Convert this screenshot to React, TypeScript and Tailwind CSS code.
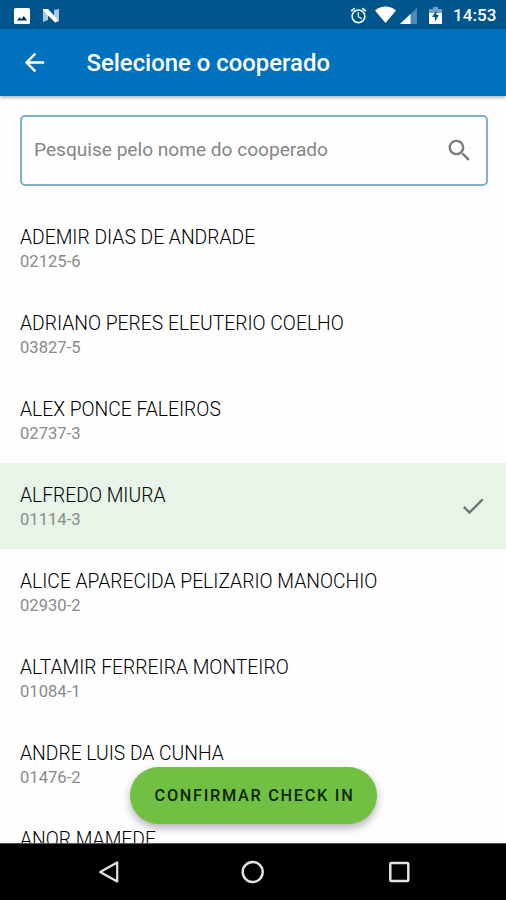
interface Cooperado {
  name: string;
  code?: string;
}

const cooperados: Cooperado[] = [
  { name: "ADEMIR DIAS DE ANDRADE", code: "02125-6" },
  { name: "ADRIANO PERES ELEUTERIO COELHO", code: "03827-5" },
  { name: "ALEX PONCE FALEIROS", code: "02737-3" },
  { name: "ALFREDO MIURA", code: "01114-3" },
  { name: "ALICE APARECIDA PELIZARIO MANOCHIO", code: "02930-2" },
  { name: "ALTAMIR FERREIRA MONTEIRO", code: "01084-1" },
  { name: "ANDRE LUIS DA CUNHA", code: "01476-2" },
  { name: "ANOR MAMEDE" },
];

const selectedCode = "01114-3";

function StatusBar() {
  return (
    <div className="flex h-[29px] shrink-0 items-center bg-[#00558d] pl-3.5 pr-[9px] pt-0.5 text-white">
      <svg className="h-4 w-4" viewBox="0 0 16 16">
        <rect width="16" height="16" rx="1.5" fill="currentColor" />
        <path d="M3 12.5l2.5-3.3 1.8 2.1L9.8 8l3.3 4.5z" fill="#00305c" />
      </svg>
      <svg className="ml-3 h-[15px] w-[18px]" viewBox="0 0 18 15">
        <path d="M1 1l5 3v8l-5 2zM12 2l5-1v12l-5-3z" fill="#a9c9e2" />
        <path d="M1 1h5l11 12-4 1.5L1 2.5z" fill="#fff" />
      </svg>

      <svg className="ml-auto h-[19px] w-[19px]" viewBox="0 0 24 24" fill="currentColor">
        <path d="M22 5.72l-4.6-3.86-1.29 1.53 4.6 3.86L22 5.72zM7.88 3.39L6.6 1.86 2 5.71l1.29 1.53 4.59-3.85zM12.5 8H11v6l4.75 2.85.75-1.23-4-2.37V8zM12 4c-4.97 0-9 4.03-9 9s4.02 9 9 9c4.97 0 9-4.03 9-9s-4.03-9-9-9zm0 16c-3.87 0-7-3.13-7-7s3.13-7 7-7 7 3.13 7 7-3.13 7-7 7z" />
      </svg>
      <svg className="mb-0.5 ml-[7px] h-[17px] w-[21px]" viewBox="0 0 21 17">
        <path d="M0 4.5C6 -.8 15 -.8 21 4.5L10.5 17z" fill="currentColor" />
      </svg>
      <svg className="ml-1 h-4 w-[17px]" viewBox="0 0 17 16">
        <path d="M17 0v16H0z" fill="#4c8bb8" />
        <path d="M10.5 6v10H0z" fill="currentColor" />
      </svg>
      <svg className="ml-3 h-[17px] w-[13px]" viewBox="0 0 13 17">
        <path d="M4 0h5v2h4v5H0V2h4z" fill="#6fa3c8" />
        <path d="M0 6h13v11H0z" fill="currentColor" />
        <path d="M7.5 3.5L3 10h3v4.5L10 8H7.5z" fill="#00558d" />
      </svg>
      <span className="ml-[11px] w-[44px] whitespace-nowrap text-[17px] font-medium leading-none tracking-[0.1px]">
        14:53
      </span>
    </div>
  );
}

function Header() {
  return (
    <header className="z-10 flex h-[67px] shrink-0 items-center bg-[#0071bc] pl-[19.5px] text-white shadow-[0_1px_4px_rgba(0,0,0,0.4)]">
      <svg className="h-[29px] w-[29px]" viewBox="0 0 24 24" fill="currentColor">
        <path d="M20 11H7.83l5.59-5.59L12 4l-8 8 8 8 1.41-1.41L7.83 13H20v-2z" />
      </svg>
      <h1 className="ml-[38px] mt-[3px] whitespace-nowrap text-[23.9px] font-medium leading-none">
        Selecione o cooperado
      </h1>
    </header>
  );
}

function SearchField() {
  return (
    <div className="ml-5 mr-[18px] mt-[19px] flex h-[71px] shrink-0 items-center justify-between rounded-[5px] border-2 border-[#7fb2c0] pb-px pl-3 pr-3">
      <span className="whitespace-nowrap text-[19.1px] text-[#858585]">
        Pesquise pelo nome do cooperado
      </span>
      <svg className="h-[29px] w-[29px] text-[#7d7d7d]" viewBox="0 0 24 24" fill="currentColor">
        <path d="M15.5 14h-.79l-.28-.27C15.41 12.59 16 11.11 16 9.5 16 5.91 13.09 3 9.5 3S3 5.91 3 9.5 5.91 16 9.5 16c1.61 0 3.09-.59 4.23-1.57l.27.28v.79l5 4.99L20.49 19l-4.99-5zm-6 0C7.01 14 5 11.99 5 9.5S7.01 5 9.5 5 14 7.01 14 9.5 11.99 14 9.5 14z" />
      </svg>
    </div>
  );
}

function CooperadoRow({ name, code, selected }: Cooperado & { selected: boolean }) {
  return (
    <li
      className={`flex h-[86.1px] shrink-0 items-start justify-between pl-5 pr-[19px] pt-5 ${
        selected ? "bg-[#e7f5e8]" : ""
      }`}
    >
      <div className="whitespace-nowrap">
        <div className="text-[19.3px] font-light leading-[26px] text-black">{name}</div>
        {code && <div className="text-[16.6px] leading-[22px] text-[#8a8a8a]">{code}</div>}
      </div>
      {selected && (
        <svg className="mt-[9px] h-7 w-7 text-[#6d776e]" viewBox="0 0 24 24" fill="currentColor">
          <path d="M9 16.17L4.83 12l-1.42 1.41L9 19 21 7l-1.41-1.41z" />
        </svg>
      )}
    </li>
  );
}

function NavigationBar() {
  return (
    <nav className="z-10 flex h-[57px] shrink-0 items-center justify-between border-t border-[#555] bg-black pl-[97px] pr-[95px] text-[#e4e4e4]">
      <svg className="h-6 w-[22px]" viewBox="0 0 22 24" fill="none" stroke="currentColor" strokeWidth="2.2" strokeLinejoin="round">
        <path d="M20.2 2.5v19L3.2 12z" />
      </svg>
      <svg className="h-6 w-6" viewBox="0 0 24 24" fill="none" stroke="currentColor" strokeWidth="2.4">
        <circle cx="11.7" cy="12" r="10" />
      </svg>
      <svg className="h-6 w-6" viewBox="0 0 24 24" fill="none" stroke="currentColor" strokeWidth="2.5">
        <rect x="3.3" y="3" width="18" height="18" rx="1" />
      </svg>
    </nav>
  );
}

export default function App() {
  return (
    <div className="flex h-[900px] w-[506px] flex-col overflow-hidden bg-white font-['Roboto',sans-serif]">
      <StatusBar />
      <Header />
      <main className="relative flex min-h-0 flex-1 flex-col overflow-hidden bg-[#fefefe]">
        <SearchField />
        <ul className="mt-[18.7px] flex flex-col">
          {cooperados.map((item) => (
            <CooperadoRow key={item.name} {...item} selected={item.code === selectedCode} />
          ))}
        </ul>

        {/* Floating action over the list */}
        <button className="absolute bottom-[19px] left-[130px] h-[57px] w-[247px] whitespace-nowrap rounded-full bg-[#72c043] pl-0.5 pt-px text-[16.3px] font-medium tracking-[1.7px] text-[#10240a] shadow-[0_4px_8px_rgba(0,0,30,0.3)]">
          CONFIRMAR CHECK IN
        </button>
      </main>
      <NavigationBar />
    </div>
  );
}
